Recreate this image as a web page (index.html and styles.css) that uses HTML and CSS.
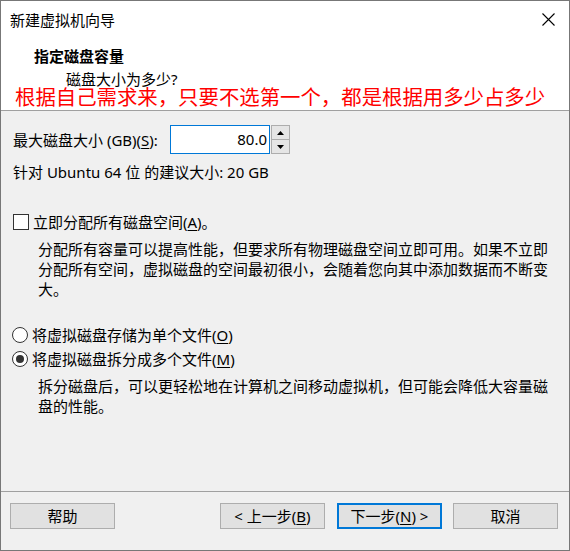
FILE: index.html
```html
<!DOCTYPE html>
<html lang="zh-CN">
<head>
<meta charset="utf-8">
<title>新建虚拟机向导</title>
<link rel="stylesheet" href="styles.css">
</head>
<body>
<div class="window">
  <div class="top">
    <div class="titlebar">
      <span class="title">新建虚拟机向导</span>
      <svg class="close" width="13" height="13" viewBox="0 0 13 13"><path d="M0.5 0.5L12.5 12.5M12.5 0.5L0.5 12.5" stroke="#000" stroke-width="1.1" fill="none"/></svg>
    </div>
    <div class="h1">指定磁盘容量</div>
    <div class="h2">磁盘大小为多少?</div>
    <div class="note">根据自己需求来，只要不选第一个，都是根据用多少占多少</div>
  </div>
  <div class="content">
    <div class="size-row">
      <span class="size-label">最大磁盘大小 (GB)(<u>S</u>):</span>
      <div class="input">80.0</div>
      <div class="spin">
        <div class="spin-btn"><svg width="7" height="4" viewBox="0 0 7 4"><path d="M0 4L3.5 0L7 4Z" fill="#000"/></svg></div>
        <div class="spin-btn"><svg width="7" height="4" viewBox="0 0 7 4"><path d="M0 0L3.5 4L7 0Z" fill="#000"/></svg></div>
      </div>
    </div>
    <div class="rec">针对 Ubuntu 64 位 的建议大小: 20 GB</div>
    <div class="opt check-row"><span class="checkbox"></span>立即分配所有磁盘空间(<u>A</u>)。</div>
    <p class="desc">分配所有容量可以提高性能，但要求所有物理磁盘空间立即可用。如果不立即<br>分配所有空间，虚拟磁盘的空间最初很小，会随着您向其中添加数据而不断变<br>大。</p>
    <div class="opt radio-row first"><span class="radio"></span>将虚拟磁盘存储为单个文件(<u>O</u>)</div>
    <div class="opt radio-row"><span class="radio checked"></span>将虚拟磁盘拆分成多个文件(<u>M</u>)</div>
    <p class="desc">拆分磁盘后，可以更轻松地在计算机之间移动虚拟机，但可能会降低大容量磁<br>盘的性能。</p>
  </div>
  <div class="footer">
    <button class="btn">帮助</button>
    <span class="spacer"></span>
    <button class="btn">&lt; 上一步(<u>B</u>)</button>
    <button class="btn default">下一步(<u>N</u>) &gt;</button>
    <button class="btn last">取消</button>
  </div>
</div>
</body>
</html>
```
FILE: styles.css
```css
html, body {
  margin: 0;
  padding: 0;
  background: #f0f0f0;
}
.window {
  width: 570px;
  height: 551px;
  box-sizing: border-box;
  border: 1px solid #777777;
  display: flex;
  flex-direction: column;
  background: #f0f0f0;
  font-family: "Noto Sans", "Noto Sans CJK SC", sans-serif;
  font-size: 15px;
  color: #000;
  overflow: hidden;
}
u {
  text-decoration: underline;
  text-underline-offset: 2px;
  text-decoration-thickness: 1px;
}
.top {
  background: #fff;
  height: 109px;
  border-bottom: 1px solid #a0a0a0;
  flex: none;
}
.titlebar {
  height: 37px;
  display: flex;
  align-items: center;
  justify-content: space-between;
  padding: 0 14px 0 9px;
}
.title {
  line-height: 20px;
}
.close {
  display: block;
}
.h1 {
  font-weight: bold;
  line-height: 20px;
  margin: 8px 0 0 33px;
}
.h2 {
  line-height: 16px;
  margin: 5px 0 0 65px;
}
.note {
  color: #ff0000;
  font-size: 20.4px;
  line-height: 20px;
  margin: 0 0 0 14px;
  white-space: nowrap;
}
.content {
  flex: 1;
  padding-left: 12px;
}
.size-row {
  display: flex;
  align-items: center;
  margin-top: 14px;
  height: 29px;
}
.size-label {
  width: 157px;
  flex: none;
  line-height: 20px;
}
.input {
  width: 100px;
  height: 29px;
  box-sizing: border-box;
  border: 1px solid #0078d7;
  background: #fff;
  text-align: right;
  padding-right: 2px;
  line-height: 27px;
}
.spin {
  margin-left: 1px;
  width: 19px;
  height: 29px;
  display: flex;
  flex-direction: column;
}
.spin-btn {
  flex: 1;
  box-sizing: border-box;
  border: 1px solid #adadad;
  background: #e5e5e5;
  display: flex;
  align-items: center;
  justify-content: center;
}
.spin-btn + .spin-btn {
  border-top: none;
}
.spin-btn svg {
  display: block;
}
.rec {
  margin-top: 8px;
  line-height: 20px;
}
.opt {
  display: flex;
  align-items: center;
  height: 20px;
  line-height: 20px;
}
.check-row {
  margin-top: 30px;
}
.checkbox {
  width: 16px;
  height: 16px;
  box-sizing: border-box;
  border: 1px solid #333;
  background: #fff;
  margin-right: 4px;
  flex: none;
}
.desc {
  margin: 7px 0 0 25px;
  line-height: 20px;
  white-space: nowrap;
}
.radio-row {
  margin-top: 4px;
}
.radio-row.first {
  margin-top: 26px;
}
.radio {
  width: 16px;
  height: 16px;
  box-sizing: border-box;
  border: 1px solid #333;
  border-radius: 50%;
  background: #fff;
  margin-left: -1px;
  margin-right: 4px;
  flex: none;
  display: flex;
  align-items: center;
  justify-content: center;
}
.radio.checked::after {
  content: "";
  width: 8px;
  height: 8px;
  border-radius: 50%;
  background: #333;
}
.footer {
  flex: none;
  height: 47px;
  border-top: 1px solid #a0a0a0;
  display: flex;
  align-items: flex-start;
  padding: 11px 11px 0 9px;
  box-sizing: content-box;
}
.spacer {
  flex: 1;
}
.btn {
  width: 105px;
  height: 26px;
  box-sizing: border-box;
  border: 1px solid #adadad;
  background: #e1e1e1;
  font-family: inherit;
  font-size: 15px;
  color: #000;
  padding: 0;
  line-height: 22px;
  margin: 0;
}
.btn.default {
  border: 2px solid #0078d7;
  margin-left: 12px;
}
.btn.last {
  margin-left: 11px;
}
```
